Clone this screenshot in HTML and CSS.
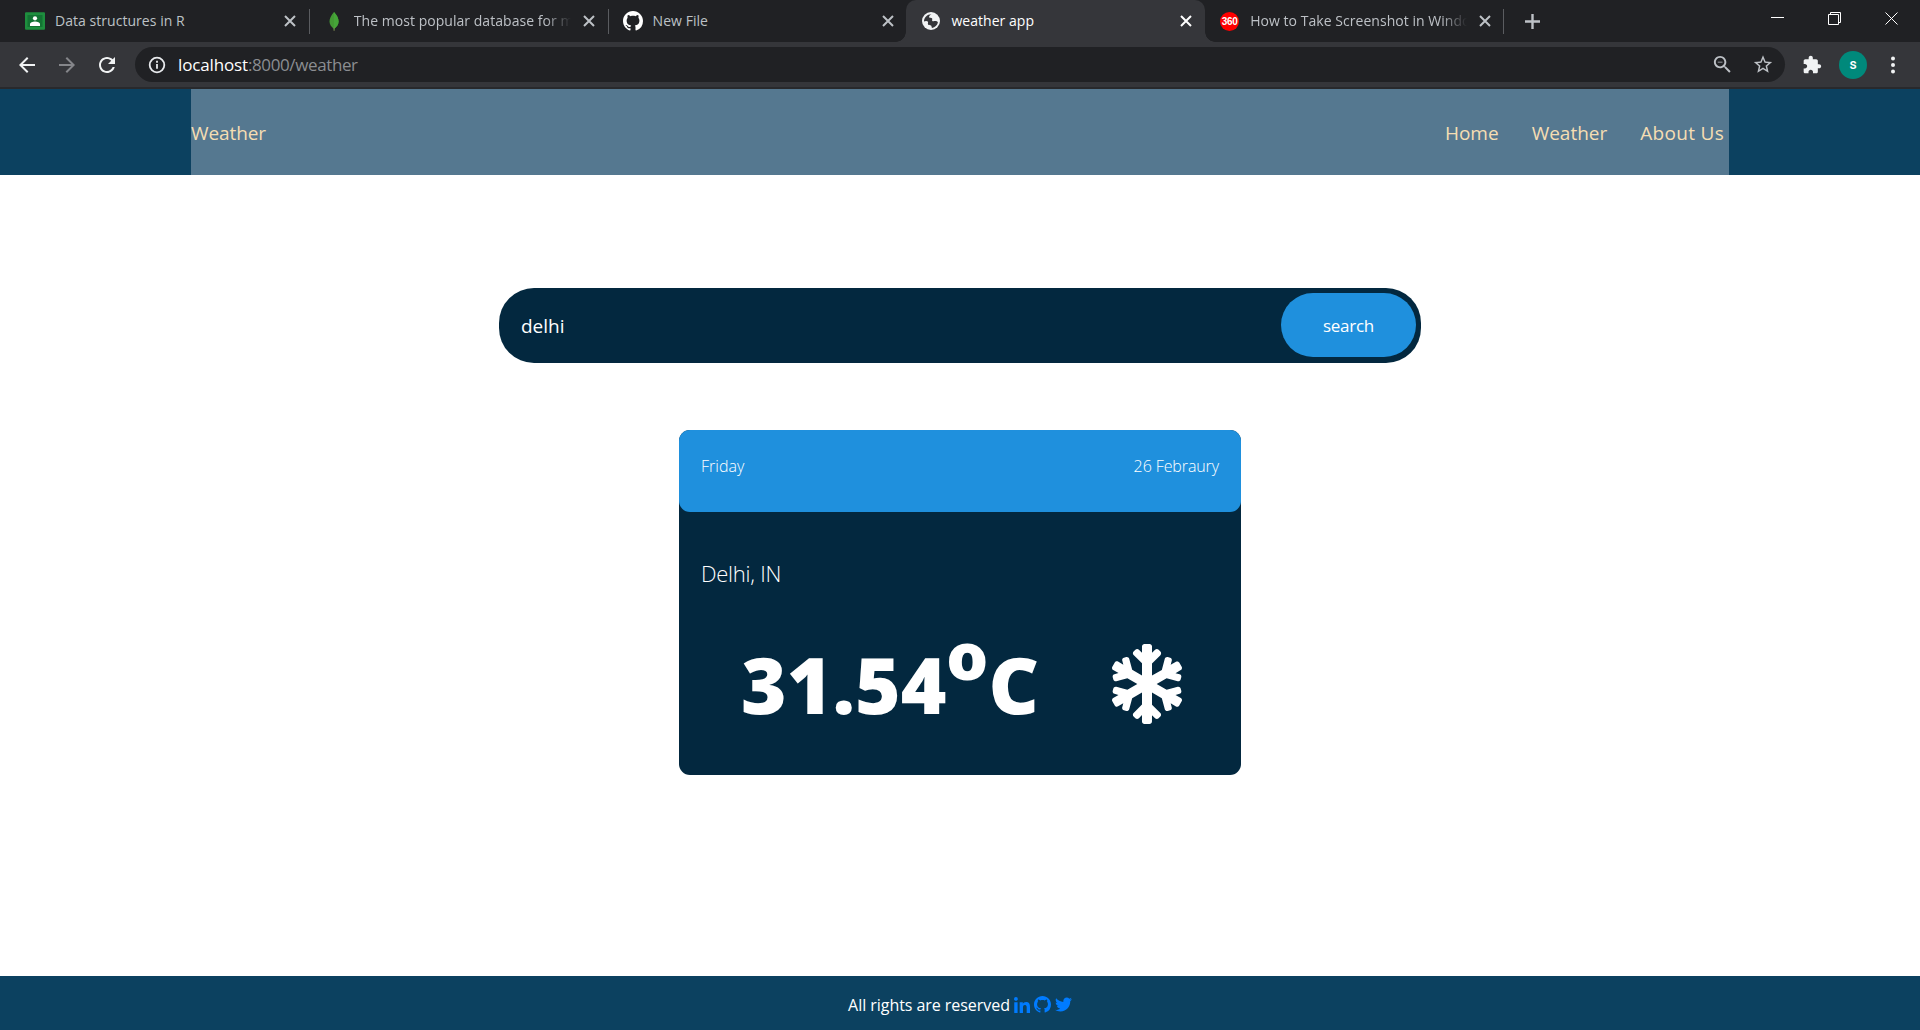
FILE: index.html
```html
<!DOCTYPE html>
<html lang="en">
<head>
<meta charset="utf-8">
<title>weather app</title>
<link rel="stylesheet" href="styles.css">
</head>
<body>
<div class="tabstrip">
  <div class="tab">
    <svg class="favicon" viewBox="0 0 20 20"><rect y="1.2" width="20" height="17.6" rx="1" fill="#1e8e3e"/><rect x="2.5" y="4" width="15" height="12" fill="#137333"/><circle cx="10" cy="7.3" r="2.1" fill="#fff"/><path d="M5 15v-2c0-1.600 2.500-2.500 5-2.500s5 .9 5 2.500v2z" fill="#fff"/></svg>
    <span class="tab-title">Data structures in R</span>
    <svg class="close" viewBox="0 0 12 12"><path d="M1 1l10 10M11 1L1 11"/></svg>
  </div>
  <div class="tab divided">
    <svg class="favicon" viewBox="0 0 20 20"><path d="M10 1C7 4.500 5.500 7.500 5.500 10.500c0 3 1.800 5.300 4 7l.3 2h.6l.2-2c2.200-1.700 4-4 4-7C14.600 7.300 13 4.500 10 1z" fill="#439934"/><path d="M10 1c3 3.500 4.600 6.300 4.600 9.500 0 3-1.800 5.300-4 7L10 16z" fill="#45a538"/><path d="M9.800 16.500h.5v4h-.5z" fill="#a6926b"/></svg>
    <span class="tab-title faded">The most popular database for m</span>
    <svg class="close" viewBox="0 0 12 12"><path d="M1 1l10 10M11 1L1 11"/></svg>
  </div>
  <div class="tab divided">
    <svg class="favicon" viewBox="0 0 16 16"><path fill="#fff" d="M8 0C3.580 0 0 3.580 0 8c0 3.540 2.290 6.530 5.470 7.590.4.070.55-.17.55-.38 0-.19-.01-.82-.01-1.490-2.010.37-2.530-.49-2.690-.94-.09-.23-.48-.94-.82-1.130-.28-.15-.68-.52-.01-.53.63-.01 1.080.58 1.230.82.72 1.210 1.870.87 2.330.66.070-.52.28-.87.51-1.070-1.780-.2-3.640-.89-3.640-3.950 0-.87.31-1.590.82-2.150-.08-.2-.36-1.020.08-2.120 0 0 .67-.21 2.200.82.64-.18 1.320-.27 2-.27s1.360.09 2 .27c1.530-1.040 2.200-.82 2.200-.82.44 1.100.16 1.920.08 2.120.51.56.82 1.270.82 2.150 0 3.070-1.870 3.750-3.650 3.950.29.25.54.73.54 1.480 0 1.070-.01 1.930-.01 2.200 0 .21.15.46.55.38A8.010 8.010 0 0 0 16 8c0-4.420-3.580-8-8-8z"/></svg>
    <span class="tab-title">New File</span>
    <svg class="close" viewBox="0 0 12 12"><path d="M1 1l10 10M11 1L1 11"/></svg>
  </div>
  <div class="tab active">
    <svg class="favicon" viewBox="0 0 20 20"><circle cx="10" cy="10" r="9" fill="#f1f3f4"/><path d="M10.500 3.200c-1.200.6-2.800 2-2.400 3 .5.900 2.200.2 2.900 1.100.8 1-.4 1.900.3 2.600.9.800 2.400-.1 3.700.2 1 .2 1.700.9 1.900 1.500-.6 2.600-2.900 5-5.900 5.400-.6-.6-.2-1.700-1-2.400-.9-.7-2.200-.1-2.900-1-.7-1 .5-2-.3-3-1-1.100-2.900-.5-3.800-.2 0-3.600 3-7.200 7.500-7.200z" fill="#35363a"/></svg>
    <span class="tab-title">weather app</span>
    <svg class="close" viewBox="0 0 12 12"><path d="M1 1l10 10M11 1L1 11"/></svg>
  </div>
  <div class="tab divided-end">
    <span class="favicon badge360">360</span>
    <span class="tab-title faded">How to Take Screenshot in Windo</span>
    <svg class="close" viewBox="0 0 12 12"><path d="M1 1l10 10M11 1L1 11"/></svg>
  </div>
  <svg class="newtab" viewBox="0 0 15 15"><path d="M7.500 0v15M0 7.500h15"/></svg>
  <div class="window-controls">
    <svg viewBox="0 0 14 14"><path d="M0 5.500h13"/></svg>
    <svg viewBox="0 0 14 14"><path d="M.5 2.500h10v10h-10zM2.500 2.500v-2h10v10h-2"/></svg>
    <svg viewBox="0 0 14 14"><path d="M.5 .5l12 12M12.500 .5l-12 12"/></svg>
  </div>
</div>
<div class="toolbar">
  <svg class="tool" viewBox="0 0 24 24"><path d="M20 11H7.830l5.590-5.590L12 4l-8 8 8 8 1.410-1.410L7.830 13H20v-2z"/></svg>
  <svg class="tool dim" viewBox="0 0 24 24"><path d="M12 4l-1.410 1.410L16.170 11H4v2h12.170l-5.580 5.590L12 20l8-8z"/></svg>
  <svg class="tool" viewBox="0 0 24 24"><path d="M17.650 6.350C16.200 4.900 14.210 4 12 4c-4.420 0-7.990 3.580-7.990 8s3.570 8 7.990 8c3.730 0 6.840-2.550 7.730-6h-2.080c-.82 2.330-3.040 4-5.650 4-3.310 0-6-2.690-6-6s2.690-6 6-6c1.660 0 3.140.69 4.220 1.780L13 11h7V4l-2.350 2.350z"/></svg>
  <div class="omnibox">
    <svg class="info" viewBox="0 0 18 18"><circle cx="9" cy="9" r="7.300"/><path d="M9 8v4.700M9 4.800v2"/></svg>
    <span class="url"><b>localhost</b><span>:8000/weather</span></span>
    <svg class="omni-icon" viewBox="0 0 24 24"><path d="M15.500 14h-.79l-.28-.27C15.410 12.590 16 11.110 16 9.500 16 5.910 13.090 3 9.500 3S3 5.910 3 9.500 5.910 16 9.500 16c1.610 0 3.090-.59 4.230-1.570l.27.28v.79l5 4.990L20.490 19l-4.990-5zm-6 0C7.010 14 5 11.990 5 9.500S7.010 5 9.500 5 14 7.010 14 9.500 11.990 14 9.500 14zM7 9h5v1H7z"/></svg>
    <svg class="omni-icon star" viewBox="0 0 24 24"><path d="M22 9.240l-7.190-.62L12 2 9.190 8.630 2 9.240l5.460 4.730L5.820 21 12 17.270 18.180 21l-1.630-7.030L22 9.240zM12 15.400l-3.760 2.270 1-4.280-3.320-2.880 4.380-.38L12 6.100l1.710 4.040 4.380.38-3.320 2.880 1 4.280L12 15.400z"/></svg>
  </div>
  <svg class="puzzle" viewBox="0 0 24 24"><path d="M20.500 11H19V7c0-1.100-.9-2-2-2h-4V3.500C13 2.120 11.880 1 10.500 1S8 2.120 8 3.500V5H4c-1.100 0-1.990.9-1.990 2v3.800H3.500c1.490 0 2.700 1.210 2.700 2.700s-1.210 2.700-2.700 2.700H2V20c0 1.100.9 2 2 2h3.800v-1.500c0-1.490 1.210-2.700 2.700-2.700s2.700 1.210 2.700 2.700V22H17c1.100 0 2-.9 2-2v-4h1.500c1.380 0 2.500-1.120 2.500-2.500S21.880 11 20.500 11z"/></svg>
  <span class="avatar">s</span>
  <svg class="menu" viewBox="0 0 6 18"><circle cx="3" cy="2.500" r="2"/><circle cx="3" cy="9" r="2"/><circle cx="3" cy="15.500" r="2"/></svg>
</div>

<header class="site-header">
  <nav class="nav">
    <a class="brand">Weather</a>
    <a>Home</a>
    <a>Weather</a>
    <a class="about">About Us</a>
  </nav>
</header>

<main class="content">
  <form class="search">
    <span class="query">delhi</span>
    <span class="search-btn">search</span>
  </form>
  <section class="card">
    <div class="card-head"><span>Friday</span><span class="date">26 Febraury</span></div>
    <p class="city">Delhi, IN</p>
    <div class="reading">
      <span class="temp">31.54<span class="degree">o</span>C</span>
      <svg class="snow" viewBox="0 0 448 512"><path d="M440.300 345.200l-33.800-19.500 26-7c8.200-2.200 13.100-10.700 10.900-18.900l-4-14.900c-2.200-8.200-10.700-13.100-18.900-10.900l-70.800 19-63.900-37 63.800-36.900 70.800 19c8.200 2.200 16.700-2.700 18.900-10.900l4-14.900c2.200-8.200-2.700-16.700-10.900-18.900l-26-7 33.800-19.500c7.400-4.300 9.900-13.700 5.700-21.100L430.400 119c-4.300-7.400-13.700-9.900-21.100-5.700l-33.800 19.500 7-26c2.200-8.200-2.700-16.700-10.900-18.900l-14.900-4c-8.200-2.200-16.700 2.700-18.900 10.900l-19 70.800-62.800 36.200v-77.500l53.700-53.100c6.200-6.200 6.200-16.400 0-22.600l-11.300-11.300c-6.200-6.200-16.400-6.200-22.600 0L256 56.400V16c0-8.800-7.200-16-16-16h-32c-8.800 0-16 7.200-16 16v40.400l-19.700-19.700c-6.200-6.200-16.400-6.200-22.600 0L138.300 48c-6.300 6.200-6.300 16.400 0 22.600l53.700 53.100v77.500l-62.800-36.200-19-70.800c-2.200-8.200-10.700-13.100-18.900-10.900l-14.900 4c-8.200 2.200-13.100 10.700-10.900 18.900l7 26-33.800-19.500c-7.400-4.300-16.800-1.700-21.100 5.700L2.100 145.700c-4.300 7.400-1.700 16.800 5.700 21.100l33.800 19.500-26 7c-8.300 2.200-13.200 10.700-11 19l4 14.900c2.200 8.200 10.700 13.100 18.900 10.900l70.800-19 63.800 36.900-63.800 36.900-70.800-19c-8.200-2.200-16.700 2.700-18.900 10.900l-4 14.900c-2.200 8.200 2.700 16.700 10.900 18.900l26 7-33.800 19.600c-7.400 4.300-9.900 13.700-5.700 21.100l15.500 26.800c4.300 7.400 13.700 9.900 21.100 5.700l33.800-19.500-7 26c-2.200 8.200 2.700 16.700 10.900 18.900l14.900 4c8.200 2.200 16.700-2.700 18.900-10.900l19-70.800 62.800-36.200v77.500l-53.700 53.100c-6.300 6.200-6.300 16.400 0 22.600l11.300 11.300c6.200 6.200 16.400 6.200 22.600 0l19.700-19.700V496c0 8.800 7.200 16 16 16h32c8.800 0 16-7.200 16-16v-40.400l19.700 19.700c6.200 6.200 16.400 6.200 22.600 0l11.300-11.300c6.300-6.200 6.300-16.400 0-22.600L256 388.300v-77.500l62.800 36.200 19 70.800c2.200 8.200 10.700 13.100 18.900 10.900l14.900-4c8.200-2.200 13.100-10.700 10.900-18.900l-7-26 33.800 19.500c7.400 4.300 16.800 1.700 21.100-5.700l15.500-26.800c4.300-7.400 1.800-16.800-5.600-21z"/></svg>
    </div>
  </section>
</main>

<footer class="site-footer">
  <span class="rights">All rights are reserved</span>
  <svg class="linkedin" viewBox="0 0 448 448"><path d="M100.280 448H7.400V148.900h92.880zM53.790 108.100C24.090 108.100 0 83.500 0 53.800a53.790 53.790 0 0 1 107.580 0c0 29.700-24.100 54.300-53.790 54.300zM447.900 448h-92.680V302.400c0-34.700-.7-79.200-48.290-79.200-48.290 0-55.690 37.700-55.690 76.700V448h-92.780V148.900h89.080v40.800h1.300c12.400-23.500 42.690-48.300 87.880-48.300 94 0 111.280 61.900 111.280 142.300V448z"/></svg>
  <svg class="github" viewBox="0 0 16 16"><path d="M8 0C3.580 0 0 3.580 0 8c0 3.540 2.290 6.530 5.470 7.590.4.070.55-.17.55-.38 0-.19-.01-.82-.01-1.490-2.010.37-2.530-.49-2.690-.94-.09-.23-.48-.94-.82-1.130-.28-.15-.68-.52-.01-.53.63-.01 1.080.58 1.230.82.72 1.210 1.870.87 2.330.66.070-.52.28-.87.51-1.070-1.780-.2-3.640-.89-3.640-3.950 0-.87.31-1.590.82-2.150-.08-.2-.36-1.020.08-2.120 0 0 .67-.21 2.200.82.64-.18 1.320-.27 2-.27s1.360.09 2 .27c1.530-1.040 2.200-.82 2.200-.82.44 1.100.16 1.920.08 2.120.51.56.82 1.270.82 2.150 0 3.070-1.870 3.750-3.650 3.950.29.25.54.73.54 1.480 0 1.070-.01 1.930-.01 2.200 0 .21.15.46.55.38A8.010 8.010 0 0 0 16 8c0-4.420-3.580-8-8-8z"/></svg>
  <svg class="twitter" viewBox="0 0 512 512"><path d="M459.370 151.716c.325 4.548.325 9.097.325 13.645 0 138.720-105.583 298.558-298.558 298.558-59.452 0-114.680-17.219-161.137-47.106 8.447.974 16.568 1.299 25.340 1.299 49.055 0 94.213-16.568 130.274-44.832-46.132-.975-84.792-31.188-98.112-72.772 6.498.974 12.995 1.624 19.818 1.624 9.421 0 18.843-1.300 27.614-3.573-48.081-9.747-84.143-51.980-84.143-102.985v-1.299c13.969 7.797 30.214 12.670 47.431 13.319-28.264-18.843-46.781-51.005-46.781-87.391 0-19.492 5.197-37.360 14.294-52.954 51.655 63.675 129.300 105.258 216.365 109.807-1.624-7.797-2.599-15.918-2.599-24.040 0-57.828 46.782-104.934 104.934-104.934 30.213 0 57.502 12.670 76.670 33.137 23.715-4.548 46.456-13.320 66.599-25.340-7.798 24.366-24.366 44.833-46.132 57.827 21.117-2.273 41.584-8.122 60.426-16.243-14.292 20.791-32.161 39.308-52.628 54.253z"/></svg>
</footer>
</body>
</html>
```
FILE: styles.css
```css
* { box-sizing: border-box; }
body { margin: 0; height: 1030px; display: flex; flex-direction: column; background: #fff; font-family: "Open Sans", "Noto Sans", sans-serif; overflow: hidden; }
svg { display: block; flex: none; }

.tabstrip { height: 42px; flex: none; display: flex; align-items: center; padding-left: 10px; background: #202124; }
.tab { position: relative; width: 298.800px; height: 42px; flex: none; display: flex; align-items: center; padding: 0 0 0 15px; }
.divided::before, .divided-end::after { content: ""; position: absolute; left: 0; top: 9px; width: 1px; height: 25px; background: #5a5c60; }
.divided-end::after { left: auto; right: 0; }
.tab.active { background: #35363a; border-radius: 10px 10px 0 0; }
.tab.active::before, .tab.active::after { content: ""; position: absolute; bottom: 0; width: 10px; height: 10px; }
.tab.active::before { left: -10px; background: radial-gradient(circle at 0 0, transparent 9.500px, #35363a 10px); }
.tab.active::after { right: -10px; background: radial-gradient(circle at 100% 0, transparent 9.500px, #35363a 10px); }
.favicon { width: 20px; height: 20px; flex: none; }
.badge360 { width: 19px; height: 19px; margin-right: 1px; border-radius: 50%; background: #f00; color: #fff; font: bold 10px/19px "Liberation Sans", sans-serif; text-align: center; letter-spacing: -.2px; }
.tab-title { width: 217px; flex: none; margin-left: 10px; padding-bottom: 1px; font-size: 14px; letter-spacing: .04px; color: #bdc1c6; white-space: nowrap; }
.faded { -webkit-mask-image: linear-gradient(to right, #000 88%, transparent); mask-image: linear-gradient(to right, #000 88%, transparent); }
.active .tab-title { color: #fff; }
.close { width: 12px; height: 12px; margin-left: 12px; stroke: #bdc1c6; stroke-width: 2; fill: none; }
.active .close { stroke: #fff; }
.newtab { width: 15px; height: 15px; margin-left: 21px; stroke: #bdc1c6; stroke-width: 2.400; }
.window-controls { display: flex; gap: 43px; margin: 0 21px 4px auto; }
.window-controls svg { width: 14px; height: 14px; fill: none; stroke: #fff; }

.toolbar { height: 47px; flex: none; display: flex; align-items: center; padding: 0 24px 0 15px; background: #35363a; border-bottom: 2px solid #28292c; }
.tool { width: 24px; height: 24px; margin-right: 16px; fill: #f1f3f4; }
.tool.dim { fill: #85868a; }
.omnibox { width: 1650px; height: 35px; display: flex; align-items: center; padding: 0 11px 0 13px; border-radius: 18px; background: #202124; }
.info { width: 18px; height: 18px; fill: none; stroke: #e8eaed; stroke-width: 1.800; }
.url { flex: 1; margin-left: 12px; font-size: 17px; letter-spacing: -.38px; color: #8b8d91; }
.url b { font-weight: 400; letter-spacing: -.15px; color: #fff; }
.omni-icon { width: 23px; height: 23px; margin-left: 18px; fill: #bdc1c6; }
.omni-icon.star { width: 22px; }
.puzzle { width: 20px; height: 20px; margin-left: 17px; fill: #f1f3f4; }
.avatar { width: 28px; height: 28px; margin-left: 17px; border-radius: 50%; background: #00897b; color: #fff; font: 500 14px/27px Roboto, sans-serif; text-align: center; }
.menu { width: 6px; height: 18px; margin-left: auto; fill: #f1f3f4; }

.site-header { height: 86px; flex: none; padding: 0 191px; background: #0c4160; }
.nav { height: 86px; display: flex; align-items: center; padding: 2px 5px 0 0; gap: 33px; background: #557890; font-size: 19px; color: #f5deb3; }
.brand { margin-right: auto; letter-spacing: -.1px; }
.about { letter-spacing: .3px; }

.content { flex: 1; display: flex; flex-direction: column; align-items: center; padding-top: 113px; }
.search { width: 922px; height: 75px; flex: none; display: flex; align-items: center; justify-content: space-between; margin: 0; padding: 0 5px 1px 22px; border-radius: 35px; background: #03283f; color: #fff; font-size: 19px; }
.query { padding-top: 2px; }
.search-btn { width: 135px; height: 64px; border-radius: 32px; background: #1f90dd; font-size: 17px; letter-spacing: -.25px; line-height: 65px; text-align: center; }
.card { width: 562px; height: 345px; flex: none; margin-top: 67px; border-radius: 11px; background: #03283f; color: #fff; font-weight: 300; }
.card-head { height: 82px; display: flex; justify-content: space-between; padding: 24px 22px 0; border-radius: 11px; background: #1f90dd; font-size: 16px; line-height: 24px; }
.date { letter-spacing: -.1px; }
.city { margin: 44px 22px 0; font-size: 22px; letter-spacing: -.25px; line-height: 34px; }
.reading { display: flex; align-items: center; justify-content: space-between; height: 120px; margin-top: 34px; padding: 0 59px 0 62px; }
.temp { font-size: 78px; font-weight: 800; line-height: 120px; white-space: nowrap; }
.degree { position: relative; top: -34px; font-size: 66px; line-height: 0; }
.snow { width: 70px; height: 80px; fill: #fff; }

.site-footer { height: 54px; flex: none; display: flex; align-items: center; justify-content: center; padding-top: 3px; background: #0c4160; color: #fff; font-size: 16px; }
.rights { padding-top: 1px; letter-spacing: -.05px; }
.site-footer svg { fill: #007bff; }
.linkedin { width: 16px; height: 16px; margin: 0 4px; }
.github { width: 17px; height: 17px; margin-right: 4px; }
.twitter { width: 17px; height: 17px; }
```
